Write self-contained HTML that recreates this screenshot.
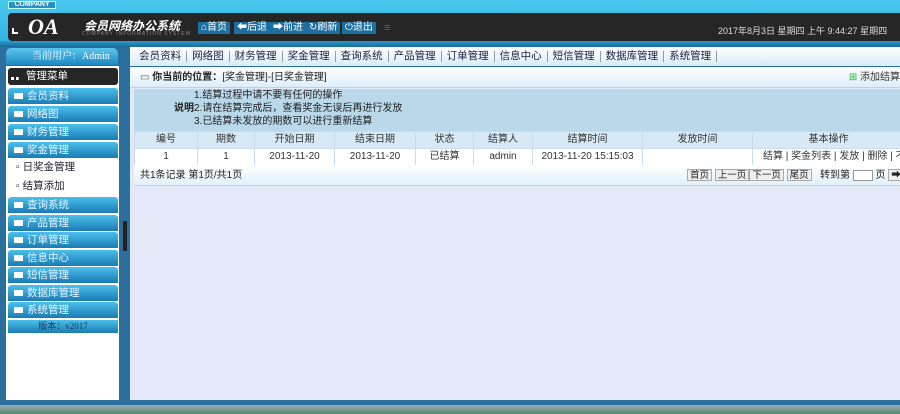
<!DOCTYPE html>
<html><head><meta charset="utf-8"><style>
*{margin:0;padding:0;box-sizing:border-box}
body{width:900px;height:414px;overflow:hidden;position:relative;background:#2c6e9c;font-family:"Liberation Sans","Noto Sans CJK SC",sans-serif;font-size:11px;color:#222}
.abs{position:absolute}
.top{left:0;top:0;width:900px;height:47px;background:linear-gradient(#49c8ee,#2fb0e0)}
.dark{left:8px;top:13px;width:892px;height:28px;background:#262626;border-radius:4px 0 0 4px}
.company{left:8px;top:1px;width:48px;height:8px;background:#2a8fc8;border:1px solid #bfe;color:#fff;font-size:7px;font-weight:bold;line-height:6px;text-align:center}
.btn{top:22px;height:12px;background:#1d6fa0;color:#fff;font-size:10px;line-height:12px;padding:0 3px}
.nav{left:118px;top:47px;width:782px;height:19px;background:linear-gradient(#fff,#d8ecf8);font-size:10.5px;line-height:19px;color:#224;white-space:nowrap}
.nav span{display:inline-block;padding:0 5px;border-right:1px solid #999;line-height:11px}
.side{left:6px;top:66px;width:113px;height:334px;background:#fff}
.user{left:6px;top:48px;width:112px;height:17px;background:linear-gradient(#5bc6ee,#1e86c0);border-radius:5px 5px 0 0;color:#fff;font-family:"Liberation Serif","Noto Serif CJK SC",serif;font-size:10px;line-height:17px;padding-left:26px}
.it{left:8px;width:110px;height:16px;background:linear-gradient(#4bc0ea,#1a7bb4);border-radius:3px 3px 0 0;color:#e6f4ff;font-size:10.5px;line-height:16px;padding-left:19px}
.it:before{content:"";position:absolute;left:6px;top:5px;width:9px;height:6px;background:#fff}
.sub{left:16px;font-size:10.5px;color:#223}
.main{left:130px;top:67px;width:770px;height:333px;background:#e5e8f7}
.hdr{left:130px;top:67px;width:770px;height:21px;background:linear-gradient(#fff,#dceefa);font-size:10px;line-height:21px;border-bottom:1px solid #b7d3e6}
.note{left:134px;top:89px;width:766px;height:42px;background:#b9d8ea;font-size:10px;line-height:13px}
table{position:absolute;left:134px;top:131px;width:770px;table-layout:fixed;border-collapse:collapse;font-size:10px;color:#333}
td{border:1px solid #c8dceb;text-align:center;height:17px;line-height:14px;padding:0;white-space:nowrap;overflow:hidden;vertical-align:middle}
tr.h td{background:#d7e9f4}
tr.r td{background:#fff}
.pg{left:134px;top:165px;width:766px;height:21px;background:linear-gradient(#fff,#e0f0fa);font-size:10px;line-height:21px;border-bottom:1px solid #c5d6e3}
.pb{display:inline-block;border:1px solid #aaa;background:#eee;height:12px;line-height:11px;padding:0 2px;font-size:9.5px}
</style></head><body>
<div class="abs top"></div>
<div class="abs dark"></div>
<div class="abs company">COMPANY</div>
<div class="abs" style="left:28px;top:14px;color:#fff;font:italic bold 22px 'Liberation Serif',serif">OA</div>
<div class="abs" style="left:12px;top:28px;width:6px;height:6px;border-left:2px solid #fff;border-bottom:2px solid #fff"></div>
<div class="abs" style="left:84px;top:17px;color:#fff;font-weight:bold;font-style:italic;font-size:12px">会员网络办公系统</div>
<div class="abs" style="left:82px;top:31px;color:#888;font-size:5px;letter-spacing:1px">COMPANY INFORMATION SYSTEM</div>
<div class="abs btn" style="left:198px">⌂首页</div>
<div class="abs btn" style="left:234px">⬅后退</div>
<div class="abs btn" style="left:270px">➡前进</div>
<div class="abs btn" style="left:306px">↻刷新</div>
<div class="abs btn" style="left:342px">⏻退出</div>
<div class="abs" style="left:384px;top:22px;color:#666;font-size:11px">≡</div>
<div class="abs" style="left:718px;top:24px;color:#ddd;font-size:9px">2017年8月3日 星期四 上午 9:44:27 星期四</div>
<div class="abs" style="left:0;top:41px;width:900px;height:6px;background:linear-gradient(#2b9bd0,#1a6a9a)"></div>
<div class="abs nav"><span style="border:0;color:#999">≡</span><span>会员资料</span><span>网络图</span><span>财务管理</span><span>奖金管理</span><span>查询系统</span><span>产品管理</span><span>订单管理</span><span>信息中心</span><span>短信管理</span><span>数据库管理</span><span>系统管理</span></div>
<div class="abs" style="left:0;top:47px;width:130px;height:358px;background:#2c6e9c"></div>
<div class="abs side"></div>
<div class="abs user">当前用户：Admin</div>
<div class="abs" style="left:8px;top:68px;width:110px;height:17px;background:#262626;color:#fff;font-size:10.5px;line-height:17px;padding-left:18px;border-radius:3px">管理菜单</div>
<div class="abs" style="left:11px;top:74px;width:8px;height:6px;border-bottom:3px dotted #fff"></div>
<div class="abs it" style="top:88px">会员资料</div>
<div class="abs it" style="top:106px">网络图</div>
<div class="abs it" style="top:124px">财务管理</div>
<div class="abs it" style="top:142px">奖金管理</div>
<div class="abs sub" style="top:159px">▫ 日奖金管理</div>
<div class="abs sub" style="top:178px">▫ 结算添加</div>
<div class="abs it" style="top:197px">查询系统</div>
<div class="abs it" style="top:215px">产品管理</div>
<div class="abs it" style="top:232px">订单管理</div>
<div class="abs it" style="top:250px">信息中心</div>
<div class="abs it" style="top:267px">短信管理</div>
<div class="abs it" style="top:285px">数据库管理</div>
<div class="abs it" style="top:302px">系统管理</div>
<div class="abs" style="left:8px;top:320px;width:110px;height:13px;background:linear-gradient(#4bc0ea,#1a7bb4);color:#1a3a5a;font-family:'Liberation Serif',serif;font-size:9px;line-height:13px;text-align:center">版本：v2017</div>
<div class="abs" style="left:123px;top:221px;width:4px;height:30px;background:#222"></div>
<div class="abs main"></div>
<div class="abs hdr"><span style="padding-left:10px;color:#666">▭</span> <b>你当前的位置：</b>[奖金管理]-[日奖金管理]<span style="position:absolute;right:0;color:#333"><span style="color:#3a3">⊞</span> 添加结算</span></div>
<div class="abs note"><div style="padding-left:60px">1.结算过程中请不要有任何的操作</div><div style="padding-left:40px"><b>说明</b>2.请在结算完成后，查看奖金无误后再进行发放</div><div style="padding-left:60px">3.已结算未发放的期数可以进行重新结算</div></div>
<table><colgroup><col style="width:63px"><col style="width:57px"><col style="width:80px"><col style="width:81px"><col style="width:58px"><col style="width:59px"><col style="width:110px"><col style="width:110px"><col style="width:152px"></colgroup>
<tr class="h"><td>编号</td><td>期数</td><td>开始日期</td><td>结束日期</td><td>状态</td><td>结算人</td><td>结算时间</td><td>发放时间</td><td>基本操作</td></tr>
<tr class="r"><td>1</td><td>1</td><td>2013-11-20</td><td>2013-11-20</td><td>已结算</td><td>admin</td><td>2013-11-20 15:15:03</td><td></td><td style="text-align:left;padding-left:10px">结算 | 奖金列表 | 发放 | 删除 | 不显示</td></tr></table>
<div class="abs pg"><span style="padding-left:6px">共1条记录 第1页/共1页</span><span style="position:absolute;left:553px;white-space:nowrap"><span class="pb">首页</span> <span class="pb">上一页</span><span class="pb">下一页</span> <span class="pb">尾页</span> &nbsp; 转到第 <span style="display:inline-block;width:20px;height:11px;background:#fff;border:1px solid #999;vertical-align:middle"></span> 页 <span class="pb">➡转</span></span></div>
<div class="abs" style="left:0;top:405px;width:900px;height:9px;background:linear-gradient(#9ab,#5a8a6a)"></div>
</body></html>
